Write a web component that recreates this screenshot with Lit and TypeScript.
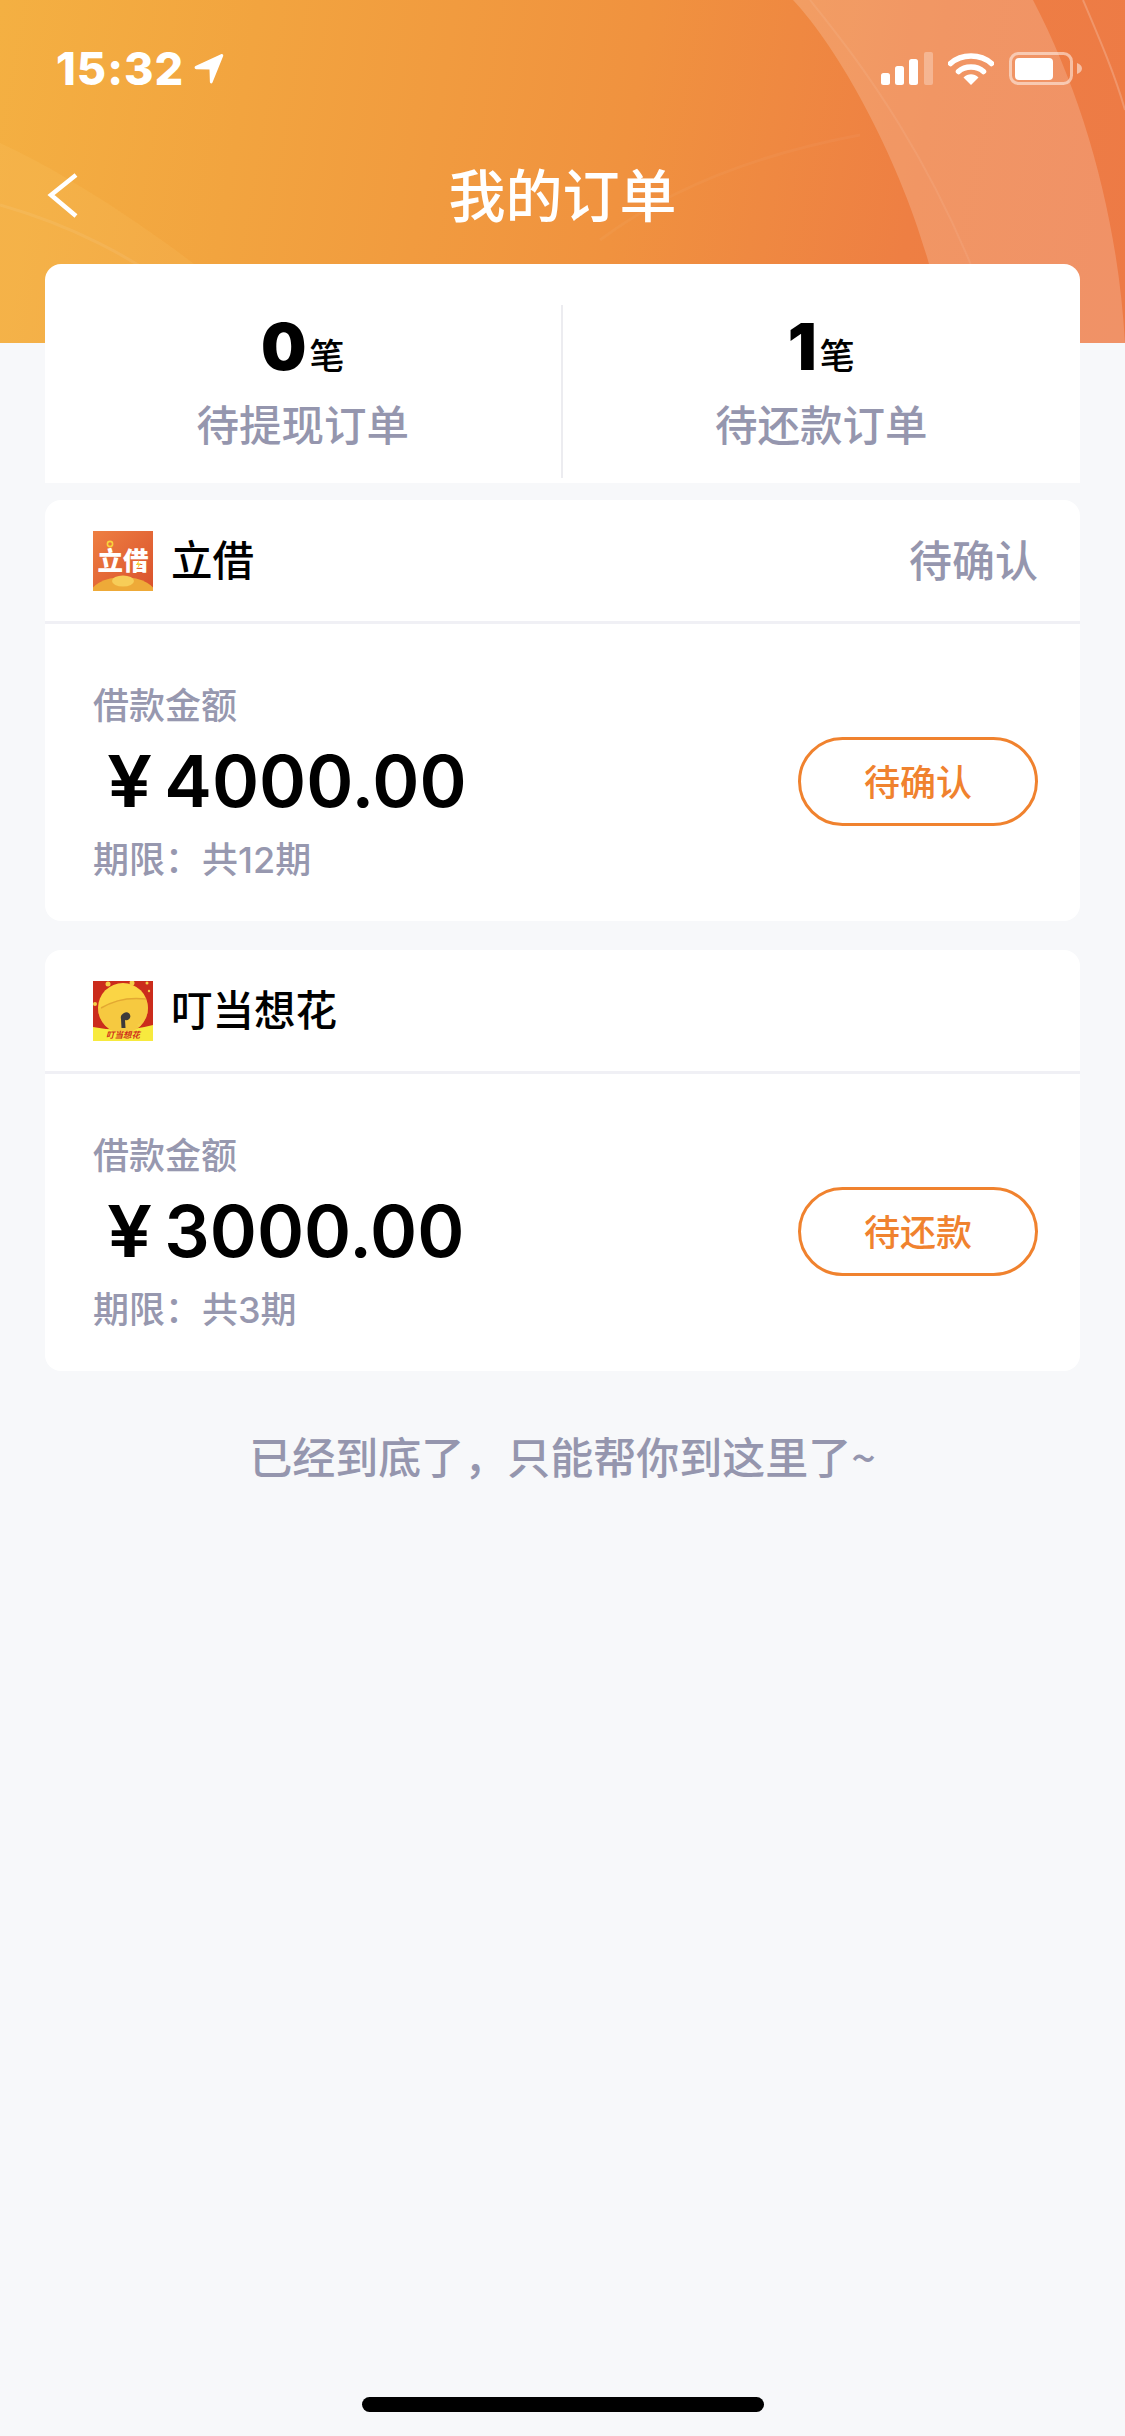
import { LitElement, html, css, svg } from "lit";
import { customElement } from "lit/decorators.js";

interface Order {
  name: string;
  logo: "lj" | "dd";
  status: string;
  amount: string;
  term: string;
  action: string;
}

const orders: Order[] = [
  { name: "立借", logo: "lj", status: "待确认", amount: "4000.00", term: "共12期", action: "待确认" },
  { name: "叮当想花", logo: "dd", status: "", amount: "3000.00", term: "共3期", action: "待还款" },
];

const logoLj = svg`
  <defs>
    <linearGradient id="ljbg" x1="0" y1="0" x2="1" y2="1">
      <stop offset="0" stop-color="#ee7f42"/><stop offset="1" stop-color="#d9512c"/>
    </linearGradient>
    <clipPath id="ljc"><rect width="60" height="60"/></clipPath>
  </defs>
  <rect width="60" height="60" fill="url(#ljbg)"/>
  <text x="30" y="39" text-anchor="middle" font-family="'Noto Sans CJK SC'" font-weight="900" font-size="25.500" fill="#fff">立借</text>
  <circle cx="17" cy="13" r="2.600" fill="none" stroke="#f9d33c" stroke-width="1.600"/>
  <path d="M46 29l-3 5h2.500l-1.500 4 4-5.500h-2.500z" fill="#f4cc32"/>
  <g clip-path="url(#ljc)">
    <ellipse cx="30" cy="66" rx="34" ry="20" fill="#eeaa38"/>
    <ellipse cx="30" cy="50" rx="11" ry="5.500" fill="#f7cd58"/>
  </g>`;

const logoDd = svg`
  <rect width="60" height="60" fill="#cb2c1c"/>
  <path d="M0 46q30 6 60 -2v16H0z" fill="#f7ea3e"/>
  <circle cx="30" cy="27" r="25" fill="#fbd545"/>
  <path d="M9 27q20 -14 44 -8q2 5 2 8a25 25 0 0 1 -50 0z" fill="#f3bf3c" opacity=".55"/>
  <path d="M8 27q20 -12 45 -9" stroke="#e3a932" stroke-width="1.500" fill="none"/>
  <path d="M31 32a4 4 0 1 1 1 7l.5 8h-4l-.5-9q-1-4 3-6z" fill="#3d3a3a"/>
  <circle cx="15" cy="3" r="2.500" fill="#f5cf48"/><circle cx="39" cy="2" r="2.500" fill="#f5cf48"/>
  <circle cx="54" cy="2" r="1.500" fill="#f5cf48"/><circle cx="56" cy="10" r="1.200" fill="#f5cf48"/>
  <circle cx="2" cy="23" r="2" fill="#f5cf48"/><circle cx="46" cy="44" r="1.500" fill="#f5cf48"/>
  <text x="30" y="57" text-anchor="middle" font-family="'Noto Sans CJK SC'" font-weight="700" font-style="italic" font-size="8.500" fill="#d0301c">叮当想花</text>`;

@customElement("app-root")
export class AppRoot extends LitElement {
  static styles = css`
    :host {
      display: block;
      position: relative;
      width: 1125px;
      min-height: 2436px;
      background: #f7f8fa;
      font-family: "Noto Sans CJK SC", "Noto Sans", sans-serif;
      overflow: hidden;
    }
    .hero {
      position: relative;
      height: 343px;
      background: linear-gradient(100deg, #f4b042 0%, #f2a43f 22%, #f0923f 55%, #ee7f43 80%, #ed7a46 100%);
      color: #fff;
      overflow: hidden;
    }
    .hero-art {
      position: absolute;
      inset: 0;
      width: 1125px;
      height: 343px;
    }
    .status {
      position: relative;
      display: flex;
      justify-content: space-between;
      align-items: flex-start;
      padding: 52px 43px 0 56px;
      height: 34px;
    }
    .time {
      display: flex;
      align-items: center;
      gap: 10px;
      font-family: Inter, sans-serif;
      font-weight: 800;
      font-size: 45px;
      line-height: 34px;
      letter-spacing: 1px;
    }
    .indicators {
      display: flex;
      align-items: center;
      gap: 15px;
    }
    .nav {
      position: relative;
      display: flex;
      align-items: center;
      justify-content: center;
      height: 80px;
      margin-top: 66px;
    }
    .back {
      position: absolute;
      left: 47px;
      top: 21px;
    }
    .title {
      font-size: 57px;
      line-height: 80px;
      font-weight: 500;
    }
    .content {
      position: relative;
      display: flex;
      flex-direction: column;
      margin: -79px 45px 0;
    }
    .stats {
      display: grid;
      grid-template-columns: 1fr 1fr;
      height: 219px;
      padding: 41px 0 5px;
      box-sizing: border-box;
      background: #fff;
      border-radius: 16px 16px 0 0;
      margin-bottom: 17px;
    }
    .stat {
      display: flex;
      flex-direction: column;
      align-items: center;
    }
    .stat:first-child {
      border-right: 2px solid #ececf0;
    }
    .count {
      display: flex;
      align-items: baseline;
      gap: 3px;
      height: 62px;
      margin-top: 11px;
      color: #000;
    }
    .num {
      font-family: Inter, sans-serif;
      font-weight: 900;
      font-size: 64px;
      line-height: 62px;
    }
    .unit {
      font-size: 35px;
      line-height: 62px;
      font-weight: 500;
      position: relative;
      top: -1px;
    }
    .stat-label {
      margin-top: 15px;
      font-size: 42.5px;
      line-height: 60px;
      font-weight: 500;
      color: #9596ae;
    }
    .card {
      background: #fff;
      border-radius: 16px;
      height: 421px;
      margin-bottom: 29px;
    }
    .card-head {
      display: flex;
      align-items: center;
      justify-content: space-between;
      height: 121px;
      padding: 0 42px 0 48px;
      border-bottom: 3px solid #f0f0f5;
    }
    .brand {
      display: flex;
      align-items: center;
      gap: 18px;
      font-size: 41.5px;
      font-weight: 500;
      color: #000;
    }
    .brand svg {
      display: block;
    }
    .brand span {
      padding-bottom: 5px;
    }
    .state {
      font-size: 43px;
      font-weight: 500;
      color: #9596ae;
      padding-bottom: 6px;
    }
    .card-body {
      display: flex;
      align-items: center;
      justify-content: space-between;
      padding: 55px 42px 0 48px;
    }
    .caption {
      font-size: 36px;
      line-height: 48px;
      font-weight: 500;
      color: #9798af;
    }
    .amount {
      display: flex;
      align-items: center;
      gap: 17px;
      height: 108px;
      padding-left: 14px;
      font-family: Inter, sans-serif;
      font-size: 71.5px;
      font-weight: 600;
      color: #000;
    }
    .yen {
      display: inline-block;
      transform: scaleX(1.12);
      transform-origin: left center;
    }
    .term {
      display: flex;
      font-size: 36px;
      line-height: 48px;
      padding-top: 1px;
      font-weight: 500;
      color: #9798af;
      font-family: Inter, "Noto Sans CJK SC", sans-serif;
    }
    .term span + span {
      margin-left: 1px;
    }
    .pill {
      display: flex;
      align-items: center;
      justify-content: center;
      box-sizing: border-box;
      width: 240px;
      height: 89px;
      padding-bottom: 3px;
      border: 3px solid #f0822e;
      border-radius: 45px;
      color: #f0822e;
      font-size: 36px;
      font-weight: 500;
    }
    .end {
      margin-top: 25px;
      text-align: center;
      font-size: 43px;
      line-height: 60px;
      font-weight: 500;
      color: #9596ae;
    }
    .home {
      position: absolute;
      left: 362px;
      bottom: 24px;
      width: 402px;
      height: 15px;
      border-radius: 8px;
      background: #000;
    }
  `;

  private renderStat(n: string, label: string) {
    return html`<div class="stat">
      <div class="count"><span class="num">${n}</span><span class="unit">笔</span></div>
      <div class="stat-label">${label}</div>
    </div>`;
  }

  private renderOrder(o: Order) {
    return html`<section class="card">
      <header class="card-head">
        <div class="brand">
          <svg width="60" height="60" viewBox="0 0 60 60">${o.logo === "lj" ? logoLj : logoDd}</svg>
          <span>${o.name}</span>
        </div>
        <span class="state">${o.status}</span>
      </header>
      <div class="card-body">
        <div>
          <div class="caption">借款金额</div>
          <div class="amount"><span class="yen">¥</span><span>${o.amount}</span></div>
          <div class="term"><span>期限：</span><span>${o.term}</span></div>
        </div>
        <div class="pill">${o.action}</div>
      </div>
    </section>`;
  }

  render() {
    return html`
      <div class="hero">
        <svg class="hero-art" viewBox="0 0 1125 343" fill="none">
          <path d="M793 0C840 50 900 160 929 264L945 343H1125C1118 220 1085 100 1033 0Z" fill="#fff" opacity=".18"/>
          <path d="M0 143C50 165 130 215 194 264L250 343H0Z" fill="#ffd27a" opacity=".12"/>
          <path d="M0 205C70 225 130 255 190 300" stroke="#fff" stroke-opacity=".07" stroke-width="3"/>
          <path d="M810 0C850 50 940 160 1000 343" stroke="#fff" stroke-opacity=".07" stroke-width="2"/>
          <path d="M1083 0C1100 40 1115 75 1125 110" stroke="#fff" stroke-opacity=".2" stroke-width="2"/>
          <path d="M600 240C680 180 780 150 860 135" stroke="#fff" stroke-opacity=".04" stroke-width="3"/>
        </svg>
        <div class="status">
          <div class="time">
            <span>15:32</span>
            <svg width="31" height="32" viewBox="0 0 31 32">
              <path d="M1.500 13 27 1.300c1.500-.7 2.700.5 2.100 2L18.500 29.500c-.6 1.500-2.500 1.200-2.600-.4L15.500 16.500 2.200 16.300c-1.800-.1-2.200-2.500-.7-3.300Z" fill="#fff"/>
            </svg>
          </div>
          <div class="indicators">
            <svg width="52" height="33" viewBox="0 0 52 33">
              <rect x="0" y="21" width="9" height="12" rx="2.500" fill="#fff"/>
              <rect x="14" y="14" width="9" height="19" rx="2.500" fill="#fff"/>
              <rect x="28" y="7" width="9" height="26" rx="2.500" fill="#fff"/>
              <rect x="43" y="0" width="9" height="33" rx="2" fill="#fff" opacity=".3"/>
            </svg>
            <svg width="46" height="33" viewBox="0 0 46 33" fill="none">
              <path d="M2.500 11.500C13.500 1.500 32.500 1.500 43.500 11.500" stroke="#fff" stroke-width="5.500" stroke-linecap="round"/>
              <path d="M10.500 19.500C17 13.500 29 13.500 35.500 19.500" stroke="#fff" stroke-width="5.500" stroke-linecap="round"/>
              <path d="M15.500 25.500C20 21.300 26 21.300 30.500 25.500L23 33Z" fill="#fff"/>
            </svg>
            <svg width="73" height="33" viewBox="0 0 73 33" fill="none">
              <rect x="1.500" y="1.500" width="61" height="30" rx="8" stroke="#fff" stroke-opacity=".5" stroke-width="3"/>
              <rect x="6" y="6" width="38" height="22" rx="4" fill="#fff"/>
              <path d="M68 11c3 1 5 3 5 5.500s-2 4.500-5 5.500Z" fill="#fff" opacity=".5"/>
            </svg>
          </div>
        </div>
        <div class="nav">
          <svg class="back" width="34" height="46" viewBox="0 0 34 46" fill="none">
            <path d="M29 2 4 22l25 21" stroke="#fff" stroke-width="4.500"/>
          </svg>
          <div class="title">我的订单</div>
        </div>
      </div>
      <div class="content">
        <div class="stats">
          ${this.renderStat("0", "待提现订单")}
          ${this.renderStat("1", "待还款订单")}
        </div>
        ${orders.map((o) => this.renderOrder(o))}
        <div class="end">已经到底了，只能帮你到这里了~</div>
      </div>
      <div class="home"></div>
    `;
  }
}
